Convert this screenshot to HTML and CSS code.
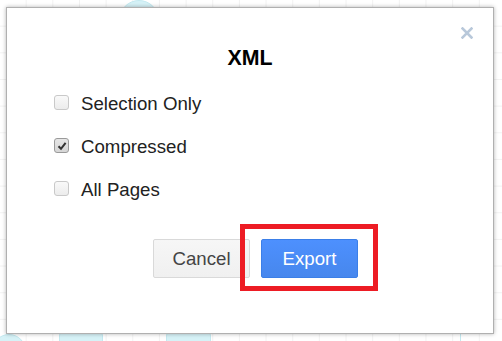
FILE: index.html
```html
<!DOCTYPE html>
<html lang="en">

<head>
  <meta name="viewport" content="width=device-width, initial-scale=1.0">
  <link rel="stylesheet" href="styles.css">
</head>

<body>

  <div class="canvas">
    <!-- diagram shapes peeking out behind the dialog -->
    <div class="shape shape-circle-top"></div>
    <div class="shape shape-circle-bottom"></div>
    <div class="shape shape-pill-1"></div>
    <div class="shape shape-pill-2"></div>
    <div class="shape shape-line"></div>

    <div class="dialog">
      <button class="close-btn" title="Close">
        <svg width="12" height="12" viewBox="0 0 12 12">
          <path d="M1.5 1.5 L10.5 10.5 M10.5 1.5 L1.5 10.5" stroke="#b8c8da" stroke-width="2.6" stroke-linecap="square" />
        </svg>
      </button>

      <div class="dialog-title">XML</div>

      <div class="options">
        <label class="option">
          <span class="check"></span>
          <span>Selection Only</span>
        </label>
        <label class="option">
          <span class="check checked">
            <svg width="10" height="10" viewBox="0 0 10 10">
              <path d="M1.5 5.2 L4 7.8 L8.6 1.8" stroke="#333" stroke-width="2" fill="none" />
            </svg>
          </span>
          <span>Compressed</span>
        </label>
        <label class="option">
          <span class="check"></span>
          <span>All Pages</span>
        </label>
      </div>

      <div class="actions">
        <button class="btn btn-cancel">Cancel</button>
        <button class="btn btn-export">Export</button>
      </div>

      <div class="highlight"></div>
    </div>
  </div>

</body>

</html>
```

FILE: styles.css
```css
html,
body {
  margin: 0;
  padding: 0;
  width: 100%;
  height: 100%;
  overflow: hidden;
  font-family: "Liberation Sans", Arial, sans-serif;
}

.canvas {
  position: relative;
  overflow: hidden;
  width: 502px;
  height: 341px;
  box-sizing: border-box;
  padding: 7px 8px 7px 6px;
  background-color: #fff;
  background-image:
    linear-gradient(to right, #f2f2f2 1px, transparent 1px),
    linear-gradient(to bottom, #f2f2f2 1px, transparent 1px);
  background-size: 26.67px 26.67px;
  background-position: -1px -1px;
}

/* shapes of the diagram behind */
.shape {
  position: absolute;
  background: #d6f2f7;
  border: 1px solid #c4e9f0;
}

.shape-circle-top {
  left: 119px;
  top: 0px;
  width: 38px;
  height: 38px;
  border-radius: 50%;
}

.shape-circle-bottom {
  left: -8px;
  top: 334px;
  width: 32px;
  height: 32px;
  border-radius: 50%;
}

.shape-pill-1 {
  left: 59px;
  top: 330px;
  width: 42px;
  height: 16px;
  border-radius: 6px;
}

.shape-pill-2 {
  left: 166px;
  top: 330px;
  width: 43px;
  height: 16px;
  border-radius: 6px;
}

.shape-line {
  left: 460px;
  top: 330px;
  width: 0px;
  height: 20px;
  background: none;
  border: none;
  border-left: 1px solid #c4e9f0;
}

.dialog {
  position: relative;
  z-index: 1;
  width: 488px;
  height: 327px;
  box-sizing: border-box;
  background: #fff;
  border: 1px solid #b0b0b0;
  box-shadow: 0 0 4px rgba(0, 0, 0, 0.3);
  padding: 37px 0 0 47px;
}

.close-btn {
  position: absolute;
  right: 19px;
  top: 18px;
  width: 14px;
  height: 14px;
  padding: 0;
  border: none;
  background: none;
  display: flex;
  align-items: center;
  justify-content: center;
  cursor: pointer;
}

.dialog-title {
  margin-left: -47px;
  text-align: center;
  font-size: 21.33px;
  line-height: 26px;
  font-weight: bold;
  color: #000;
}

.options {
  margin-top: 21px;
  display: flex;
  flex-direction: column;
  gap: 19px;
}

.option {
  display: flex;
  align-items: center;
  gap: 12px;
  font-size: 18.67px;
  line-height: 24px;
  color: #222;
}

.check {
  width: 13px;
  height: 13px;
  border: 1px solid #c9c9c9;
  border-radius: 3px;
  background: linear-gradient(#f9f9f9, #ececec);
  display: flex;
  align-items: center;
  justify-content: center;
  margin-top: -3px;
}

.check.checked {
  border-color: #9a9a9a;
  background: linear-gradient(#e6e6e6, #d6d6d6);
}

/* Buttons */
.actions {
  margin-top: 37px;
  padding-left: 99px;
  display: flex;
  gap: 11px;
}

.btn {
  width: 97px;
  height: 39px;
  box-sizing: border-box;
  border-radius: 2px;
  font-family: "Liberation Sans", Arial, sans-serif;
  font-size: 18.67px;
  padding: 0;
  cursor: pointer;
}

.btn-cancel {
  background: linear-gradient(#f6f6f6, #f0f0f0);
  border: 1px solid #d9d9d9;
  color: #444;
}

.btn-export {
  background: linear-gradient(#4d90fe, #4787ed);
  border: 1px solid #3b7fe8;
  color: #fff;
}

/* red annotation frame */
.highlight {
  position: absolute;
  left: 233px;
  top: 216px;
  width: 138px;
  height: 67px;
  box-sizing: border-box;
  border: 5px solid #ed1c24;
  pointer-events: none;
}
```
